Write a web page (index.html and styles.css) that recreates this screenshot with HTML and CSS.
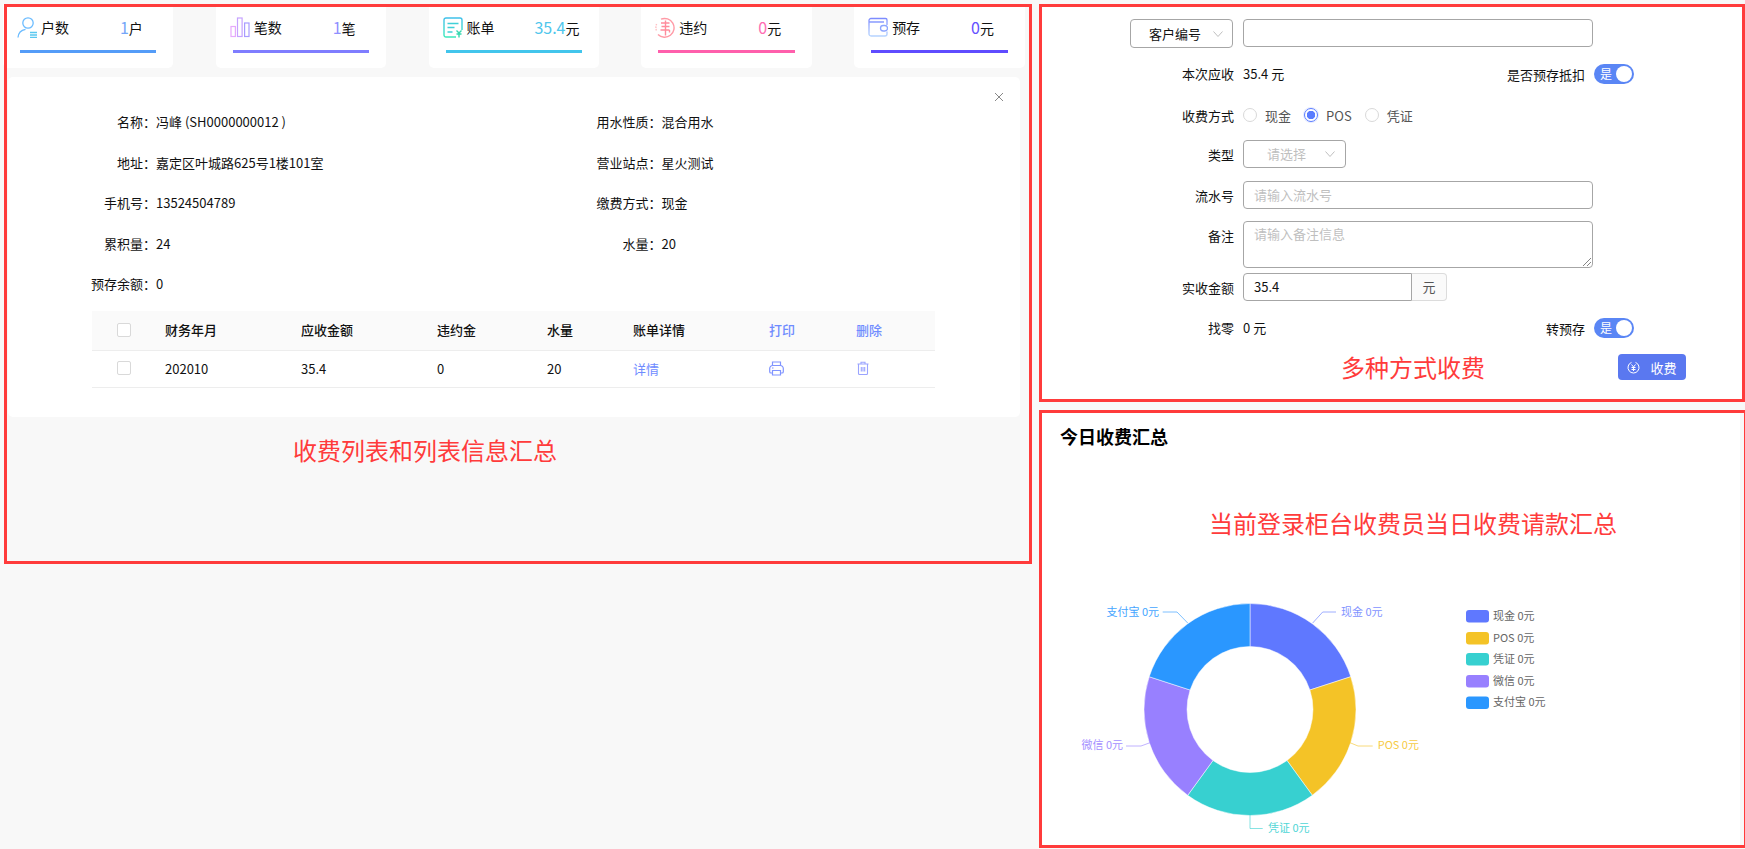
FILE: index.html
```html
<!DOCTYPE html>
<html lang="zh-CN">

<head>
  <meta charset="UTF-8" />
  <title>收费</title>
  <link rel="stylesheet" href="styles.css">
</head>

<body>
  <section class="box box-list">
    <div class="cards">
      <div class="card">
        <div class="card-head">
          <svg class="card-icon" viewBox="0 0 20 21" fill="none" stroke="#6cbcff" stroke-width="1.3">
            <circle cx="11" cy="6" r="5.2" />
            <path d="M1 20.500C1.300 16 4.500 13 8.500 12.300" />
            <path d="M13 15.500h7M13 18h7M13 20.500h7" stroke="#5ac8f0" />
          </svg>
          <span class="card-name">户数</span>
          <span class="card-value"><b class="c-blue">1</b>户</span>
        </div>
        <div class="bar bg-blue"></div>
      </div>
      <div class="card">
        <div class="card-head">
          <svg class="card-icon" viewBox="0 0 20 21" fill="none" stroke-width="1.2">
            <rect x="1" y="9.500" width="4.400" height="10" stroke="#e6aafc" />
            <rect x="7.500" y="1" width="4.600" height="18.500" stroke="#c6a2ff" />
            <rect x="14.600" y="6" width="4.400" height="13.500" stroke="#a89cff" />
          </svg>
          <span class="card-name">笔数</span>
          <span class="card-value"><b class="c-violet">1</b>笔</span>
        </div>
        <div class="bar bg-violet"></div>
      </div>
      <div class="card">
        <div class="card-head">
          <svg class="card-icon" viewBox="0 0 20 21" fill="none" stroke-width="1.4">
            <defs>
              <linearGradient id="g3" x1="0" y1="0" x2="0" y2="1">
                <stop offset="0" stop-color="#3fc0ea" />
                <stop offset="1" stop-color="#3ce8bc" />
              </linearGradient>
            </defs>
            <path d="M13 20H3a2 2 0 0 1-2-2V3a2 2 0 0 1 2-2h14a2 2 0 0 1 2 2v10" stroke="url(#g3)" />
            <path d="M4.500 6.500h11M4.500 10.500h7M4.500 15h5" stroke="#3fd0d8" />
            <path d="M13.500 13.500l2.500 2.500 2.500-2.500M13.500 17h5M16 16v4.500" stroke="#35d8b0" />
          </svg>
          <span class="card-name">账单</span>
          <span class="card-value"><b class="c-cyan">35.4</b>元</span>
        </div>
        <div class="bar bg-cyan"></div>
      </div>
      <div class="card">
        <div class="card-head">
          <svg class="card-icon" viewBox="0 0 20 21" fill="none" stroke-width="1.4">
            <path d="M6 2.200A9.400 9.400 0 1 1 3 17.500" stroke="#ff9aa6" />
            <path d="M1.600 7A9.400 9.400 0 0 0 1.600 14" stroke="#ffc0c4" stroke-dasharray="1.500 1" />
            <path d="M6 6h8.500M6.500 9.500h8M5.500 13h9M14.500 13v2.500M10.500 3.500v15" stroke="#ff8c9c" />
          </svg>
          <span class="card-name">违约</span>
          <span class="card-value"><b class="c-pink">0</b>元</span>
        </div>
        <div class="bar bg-pink"></div>
      </div>
      <div class="card">
        <div class="card-head">
          <svg class="card-icon" viewBox="0 0 20 21" fill="none" stroke-width="1.3">
            <defs>
              <linearGradient id="g5" x1="0" y1="0" x2="0" y2="1">
                <stop offset="0" stop-color="#7d8cff" />
                <stop offset="1" stop-color="#b6d4ff" />
              </linearGradient>
            </defs>
            <path d="M1 5V3.500A2 2 0 0 1 3 1.500h14.500a1.500 1.500 0 0 1 1.500 1.500v5M19 14.500V17a2 2 0 0 1-2 2H3a2 2 0 0 1-2-2V5h15" stroke="url(#g5)" />
            <rect x="12.500" y="8.500" width="7" height="5.500" rx="2.700" stroke="#8ea6ff" />
          </svg>
          <span class="card-name">预存</span>
          <span class="card-value"><b class="c-indigo">0</b>元</span>
        </div>
        <div class="bar bg-indigo"></div>
      </div>
    </div>

    <div class="panel">
      <svg class="close" viewBox="0 0 10 10" fill="none" stroke="#888" stroke-width="1">
        <path d="M1 1l8 8M9 1l-8 8" />
      </svg>
      <div class="info">
        <div class="info-item"><span class="info-label">名称：</span><span>冯峰 (SH0000000012 )</span></div>
        <div class="info-item"><span class="info-label">用水性质：</span><span>混合用水</span></div>
        <div class="info-item"><span class="info-label">地址：</span><span>嘉定区叶城路625号1楼101室</span></div>
        <div class="info-item"><span class="info-label">营业站点：</span><span>星火测试</span></div>
        <div class="info-item"><span class="info-label">手机号：</span><span>13524504789</span></div>
        <div class="info-item"><span class="info-label">缴费方式：</span><span>现金</span></div>
        <div class="info-item"><span class="info-label">累积量：</span><span>24</span></div>
        <div class="info-item"><span class="info-label">水量：</span><span>20</span></div>
        <div class="info-item"><span class="info-label">预存余额：</span><span>0</span></div>
      </div>

      <table class="bills">
        <colgroup>
          <col class="col-check">
          <col class="col-wide">
          <col class="col-wide">
          <col class="col-late">
          <col class="col-water">
          <col class="col-wide">
          <col class="col-print">
          <col class="col-del">
        </colgroup>
        <thead>
          <tr>
            <th><span class="check"></span></th>
            <th>财务年月</th>
            <th>应收金额</th>
            <th>违约金</th>
            <th>水量</th>
            <th>账单详情</th>
            <th class="link">打印</th>
            <th class="link">删除</th>
          </tr>
        </thead>
        <tbody>
          <tr>
            <td><span class="check"></span></td>
            <td>202010</td>
            <td>35.4</td>
            <td>0</td>
            <td>20</td>
            <td class="link">详情</td>
            <td>
              <svg class="print-icon" viewBox="0 0 15 15" fill="none" stroke="#8094ff" stroke-width="1.200">
                <path d="M3.500 4.500V1h8v3.500" />
                <path d="M3.500 12H2a1.300 1.300 0 0 1-1.300-1.300V7.500A3 3 0 0 1 3.700 4.500h7.600a3 3 0 0 1 3 3v3.200A1.300 1.300 0 0 1 13 12h-1.500" />
                <path d="M3.500 9.500h8V14h-8z" />
                <path d="M3 7h1.500" />
              </svg>
            </td>
            <td>
              <svg class="trash-icon" viewBox="0 0 12 14" fill="none" stroke="#9aa4ff" stroke-width="1.100">
                <path d="M.5 3h11M4 3V1.200h4V3" />
                <path d="M1.500 3v9.500a1 1 0 0 0 1 1h7a1 1 0 0 0 1-1V3" />
                <path d="M4.300 6v4.500M6 6v4.500M7.700 6v4.500" />
              </svg>
            </td>
          </tr>
        </tbody>
      </table>
    </div>

    <p class="note note-list">收费列表和列表信息汇总</p>
  </section>

  <div class="side">
    <section class="box box-form">
      <div class="row row-first">
        <div class="select select-key">客户编号<svg class="chevron" viewBox="0 0 10 6" fill="none" stroke="#bfbfbf"><path d="M.5.500l4.500 5 4.500-5" /></svg></div>
        <div class="input"></div>
      </div>
      <div class="row row-text row-due">
        <label>本次应收</label>
        <div class="split">
          <span>35.4 元</span>
          <div class="toggle-group">是否预存抵扣<span class="switch">是</span></div>
        </div>
      </div>
      <div class="row row-pay">
        <label>收费方式</label>
        <div class="radios">
          <span class="radio"></span><span class="radio-text">现金</span>
          <span class="radio on"></span><span class="radio-text">POS</span>
          <span class="radio"></span><span class="radio-text">凭证</span>
        </div>
      </div>
      <div class="row row-type">
        <label>类型</label>
        <div class="select select-type">请选择<svg class="chevron" viewBox="0 0 10 6" fill="none" stroke="#bfbfbf"><path d="M.5.500l4.500 5 4.500-5" /></svg></div>
      </div>
      <div class="row row-serial">
        <label>流水号</label>
        <div class="input placeholder">请输入流水号</div>
      </div>
      <div class="row row-remark">
        <label>备注</label>
        <div class="input textarea placeholder">请输入备注信息
          <svg class="grip" viewBox="0 0 9 9" fill="none" stroke="#666" stroke-width="0.800"><path d="M1 9l8-8M5 9l4-4" /></svg>
        </div>
      </div>
      <div class="row row-amount">
        <label>实收金额</label>
        <div class="amount">
          <div class="input amount-input">35.4</div>
          <div class="addon">元</div>
        </div>
      </div>
      <div class="row row-text row-change">
        <label>找零</label>
        <div class="split">
          <span>0 元</span>
          <div class="toggle-group">转预存<span class="switch">是</span></div>
        </div>
      </div>
      <div class="form-foot">
        <p class="note">多种方式收费</p>
        <button class="pay-btn">
          <svg viewBox="0 0 13 13" fill="none" stroke="#fff" stroke-width="1">
            <path d="M8.500 1.400a5.500 5.500 0 1 1-4 0" />
            <path d="M4.500 3.500l2 2.500 2-2.500M4.500 6.500h4M4.500 8.500h4M6.500 6v4" />
          </svg>
          收费
        </button>
      </div>
    </section>

    <section class="box box-chart">
      <h3 class="chart-title">今日收费汇总</h3>
      <p class="note note-chart">当前登录柜台收费员当日收费请款汇总</p>
      <svg class="chart" viewBox="0 0 706 288" width="706" height="288">
        <g stroke="#fff" stroke-width="0.500">
          <path fill="#5f78ff" d="M211 42.500A106 106 0 0 1 311.800 115.700L270.900 129A63 63 0 0 0 211 85.500Z" />
          <path fill="#f4c327" d="M311.800 115.700A106 106 0 0 1 273.300 234.300L248 199.500A63 63 0 0 0 270.900 129Z" />
          <path fill="#37d0d0" d="M273.300 234.300A106 106 0 0 1 148.700 234.300L174 199.500A63 63 0 0 0 248 199.500Z" />
          <path fill="#9880ff" d="M148.700 234.300A106 106 0 0 1 110.200 115.700L151.100 129A63 63 0 0 0 174 199.500Z" />
          <path fill="#2a97ff" d="M110.200 115.700A106 106 0 0 1 211 42.500L211 85.500A63 63 0 0 0 151.100 129Z" />
        </g>
        <g fill="none" stroke-opacity="0.600">
          <path stroke="#5f78ff" d="M273.700 62L283.700 51H297" />
          <path stroke="#f4c327" d="M311 181.700L319 185H333.700" />
          <path stroke="#37d0d0" d="M211 254V267.500H223.700" />
          <path stroke="#9880ff" d="M111 181.700L102 185H87" />
          <path stroke="#2a97ff" d="M148.700 62L138 51H123.700" />
        </g>
        <g>
          <text x="302" y="49.500" fill="#7f93ff">现金 0元</text>
          <text x="338.700" y="182.500" fill="#f6cb45">POS 0元</text>
          <text x="229" y="266" fill="#4fd6d6">凭证 0元</text>
          <text x="84" y="182.500" fill="#a48fff" text-anchor="end">微信 0元</text>
          <text x="120" y="49.500" fill="#45a5ff" text-anchor="end">支付宝 0元</text>
        </g>
        <rect x="427" y="49" width="23" height="12.500" rx="3" fill="#5f78ff" />
        <rect x="427" y="71" width="23" height="12.500" rx="3" fill="#f4c327" />
        <rect x="427" y="92" width="23" height="12.500" rx="3" fill="#37d0d0" />
        <rect x="427" y="114" width="23" height="12.500" rx="3" fill="#9880ff" />
        <rect x="427" y="135.500" width="23" height="12.500" rx="3" fill="#2a97ff" />
        <g class="legend-labels">
          <text x="454" y="53.500">现金 0元</text>
          <text x="454" y="75.500">POS 0元</text>
          <text x="454" y="96.500">凭证 0元</text>
          <text x="454" y="118.500">微信 0元</text>
          <text x="454" y="140">支付宝 0元</text>
        </g>
      </svg>
    </section>
  </div>
</body>

</html>
```

FILE: styles.css
```css
html,
body {
  height: 100%;
}

body {
  font-family: "Noto Sans CJK SC", sans-serif;
  font-size: 13px;
  background: #f8f8f8;
  margin: 0;
  padding: 4px 0 0 4px;
  box-sizing: border-box;
  color: #111;
  display: flex;
  gap: 7px;
  align-items: flex-start;
  overflow: hidden;
}

p,
h3 {
  margin: 0;
}

.box {
  outline: 3px solid #ff3b3b;
  outline-offset: -3px;
  box-sizing: border-box;
}

.box-list {
  width: 1028px;
  height: 560px;
}

.side {
  width: 706px;
  display: flex;
  flex-direction: column;
  gap: 8px;
}

.note {
  color: #ff3b3b;
  font-size: 24px;
  line-height: 34px;
}

/* top cards */
.cards {
  display: flex;
  gap: 42.4px;
  margin-left: -1px;
}

.card {
  width: 170.4px;
  height: 64px;
  box-sizing: border-box;
  padding: 13px 17px 0;
  background: white;
  border-radius: 0 0 5px 5px;
}

.card-head {
  display: flex;
  align-items: center;
  height: 21px;
}

.card-icon {
  width: 20px;
  height: 21px;
  margin-left: -3px;
  flex: none;
}

.card-name {
  margin-left: 4px;
  padding-bottom: 2px;
  font-size: 14px;
  flex: 1;
}

.card-value {
  width: 50px;
  flex: none;
  padding-bottom: 2px;
  text-align: center;
  font-size: 14px;
  white-space: nowrap;
}

.card-value b {
  font-size: 16px;
  font-weight: normal;
}

.bar {
  height: 3px;
  margin-top: 12px;
}

.c-blue { color: #74a6f8; }
.c-violet { color: #8f8fff; }
.c-cyan { color: #4fc6ec; }
.c-pink { color: #ff6db3; }
.c-indigo { color: #6450ff; }

.bg-blue { background: #549cf8; }
.bg-violet { background: #7f7dff; }
.bg-cyan { background: #42c5ec; }
.bg-pink { background: #ff5fac; }
.bg-indigo { background: #5f4cff; }

/* customer panel */
.panel {
  position: relative;
  width: 1012px;
  height: 340px;
  margin: 9px 0 0 4px;
  padding: 35px 0 0 76px;
  box-sizing: border-box;
  background: white;
  border-radius: 5px;
}

.close {
  position: absolute;
  top: 15px;
  right: 16px;
  width: 10px;
  height: 10px;
}

.info {
  display: grid;
  grid-template-columns: 505.5px 1fr;
  row-gap: 20.5px;
}

.info-item {
  display: flex;
  line-height: 20px;
}

.info-label {
  width: 72px;
  text-align: right;
  white-space: nowrap;
}

.bills {
  width: 843px;
  margin: 17px 0 0 8px;
  border-collapse: collapse;
  table-layout: fixed;
}

.col-check { width: 73px; }
.col-wide { width: 136px; }
.col-late { width: 110px; }
.col-water { width: 86px; }
.col-print { width: 87px; }
.col-del { width: 79px; }

.bills th,
.bills td {
  padding: 0 0 2px;
  text-align: left;
  border-bottom: 1px solid #ededed;
}

.bills th {
  height: 37px;
  background: #fafafa;
  font-weight: 500;
}

.bills td {
  height: 34px;
}

.bills .link {
  color: #6f8cff;
}

.check {
  display: block;
  width: 12px;
  height: 12px;
  margin-left: 25px;
  border: 1px solid #d9d9d9;
  border-radius: 2px;
  background: white;
}

.print-icon {
  display: block;
  width: 15px;
  height: 15px;
}

.trash-icon {
  display: block;
  width: 12px;
  height: 14px;
  margin-left: 1px;
}

.note-list {
  margin: 16px 0 0 289px;
}

/* charge form */
.box-form {
  height: 398px;
  padding: 15px 0 0;
  background: white;
}

.row {
  width: 595px;
  min-height: 28px;
  margin-top: 13px;
  display: grid;
  grid-template-columns: 195px 1fr;
  column-gap: 9px;
  align-items: center;
}

.row label {
  text-align: right;
}

.row-text label,
.row-text .split > span {
  padding-bottom: 2px;
}

.row-first {
  margin-top: 0;
  margin-left: 91px;
  width: 464px;
  grid-template-columns: 103px 350px;
  column-gap: 10px;
  align-items: start;
}

.row-due { margin-top: 12px; }

.row-type { margin-top: 11px; }

.row-remark {
  margin-top: 12px;
  align-items: start;
}

.row-remark label {
  line-height: 30px;
}

.row-amount { margin-top: 5px; }

.select,
.input {
  height: 28px;
  box-sizing: border-box;
  border: 1px solid #a6a6a6;
  border-radius: 4px;
  background: white;
  line-height: 26px;
}

.select {
  display: flex;
  align-items: center;
  justify-content: space-between;
}

.select-key {
  height: 29px;
  padding: 0 9px 0 18px;
}

.select-type {
  width: 103px;
  padding: 0 10px 0 23px;
  color: #bfbfbf;
}

.chevron {
  width: 10px;
  height: 6px;
}

.input {
  width: 350px;
  padding: 0 10px;
}

.placeholder {
  color: #bfbfbf;
}

.textarea {
  position: relative;
  height: 47px;
  line-height: 24px;
}

.grip {
  position: absolute;
  right: 1px;
  bottom: 1px;
  width: 9px;
  height: 9px;
}

.amount {
  display: flex;
}

.amount .amount-input {
  width: 169px;
  border-radius: 4px 0 0 4px;
}

.addon {
  width: 35px;
  height: 28px;
  box-sizing: border-box;
  border: 1px solid #dcdcdc;
  border-left: none;
  border-radius: 0 4px 4px 0;
  background: #fafafa;
  color: #555;
  text-align: center;
  line-height: 26px;
}

.split {
  width: 391px;
  display: flex;
  justify-content: space-between;
  align-items: center;
}

.toggle-group {
  display: flex;
  align-items: center;
  gap: 9px;
}

.switch {
  position: relative;
  width: 40px;
  height: 20px;
  box-sizing: border-box;
  padding-left: 6px;
  border-radius: 10px;
  background: #5a86f5;
  color: white;
  font-size: 12px;
  line-height: 20px;
}

.switch::after {
  content: "";
  position: absolute;
  top: 2px;
  right: 2px;
  width: 16px;
  height: 16px;
  border-radius: 50%;
  background: white;
}

.radios {
  display: flex;
  align-items: center;
}

.radio {
  width: 14px;
  height: 14px;
  box-sizing: border-box;
  border: 1px solid #d9d9d9;
  border-radius: 50%;
}

.radio.on {
  border-color: #5a7cff;
  box-shadow: 0 0 0 1px rgba(90, 124, 255, 0.15);
  background: radial-gradient(circle, #5a7cff 0 4px, white 4.5px);
}

.radio-text {
  margin: 0 13px 0 8px;
  color: #555;
}

.form-foot {
  width: 647px;
  margin-top: 12px;
  padding-left: 302px;
  box-sizing: border-box;
  display: flex;
  justify-content: space-between;
  align-items: center;
  height: 26px;
}

.pay-btn {
  width: 68px;
  height: 26px;
  padding: 0;
  display: flex;
  align-items: center;
  justify-content: center;
  gap: 10px;
  border: none;
  border-radius: 4px;
  background: #5a78f0;
  color: white;
  font: inherit;
}

.pay-btn svg {
  width: 13px;
  height: 13px;
}

/* today summary */
.box-chart {
  width: 708px;
  height: 438px;
  padding: 13px 0 0 21px;
  background: white;
  border-right: 7px solid #f8f8f8;
}

.chart-title {
  font-size: 18px;
  line-height: 26px;
  font-weight: bold;
  color: black;
}

.note-chart {
  margin: 57px 0 0 149px;
}

.chart {
  display: block;
  margin: 21px 0 0 -21px;
}

.chart text {
  font-size: 11px;
  dominant-baseline: central;
}

.legend-labels text {
  fill: #666;
}
```
